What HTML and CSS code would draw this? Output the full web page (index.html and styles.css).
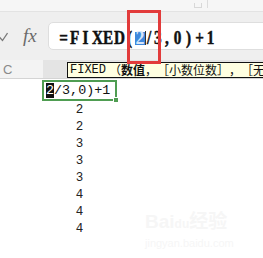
FILE: index.html
```html
<!DOCTYPE html>
<html>
<head>
<meta charset="utf-8">
<link rel="stylesheet" href="styles.css">
</head>
<body>
<div class="app">
  <div class="topbar"><span class="tb-mark"></span><span class="tb-line"></span></div>
  <div class="fbar">
    <svg class="check" width="8" height="10" viewBox="0 0 8 10"><path d="M-1 4.5 L2.5 8.5 L7.5 1" fill="none" stroke="#7a7a7a" stroke-width="1.3"/></svg>
    <span class="fx">fx</span>
    <div class="input">
      <span class="c">=</span><span class="c">F</span><span class="c">I</span><span class="c">X</span><span class="c">E</span><span class="c">D</span><span class="c">(</span><span class="sel">2</span><span class="caret"></span><span class="c w8">/</span><span class="c w9">3</span><span class="c w10">,</span><span class="c">0</span><span class="c">)</span><span class="c">+</span><span class="c">1</span>
    </div>
  </div>
  <div class="hdr">
    <div class="corner">C</div>
    <div class="colhdr"></div>
  </div>
  <div class="grid">
    <div class="col">
      <div class="editor"><span class="esel">2</span>/3,0)+1<span class="handle"></span></div>
      <div class="cell">2</div>
      <div class="cell">2</div>
      <div class="cell">3</div>
      <div class="cell">3</div>
      <div class="cell">3</div>
      <div class="cell">4</div>
      <div class="cell">4</div>
      <div class="cell">4</div>
    </div>
  </div>
  <div class="tip"><span class="lat">FIXED</span><span class="cjk">（<b>数值</b>，［小数位数］，［无千位分隔符］）</span></div>
  <div class="redbox"></div>
  <div class="wm"><div class="wm1">Bai<span class="paw">du</span>经验</div><div class="wm2">jingyan.baidu.com</div></div>
</div>
</body>
</html>
```
FILE: styles.css
```css
html, body { margin: 0; padding: 0; background: #ffffff; }
.app { position: relative; width: 263px; height: 258px; overflow: hidden; background: #ffffff; }
.topbar { height: 11px; background: #f6f6f6; border-bottom: 1px solid #e3e3e3; display: flex; align-items: flex-start; }
.tb-mark { margin-left: 194px; margin-top: 3px; width: 6px; height: 4px; border: 1px solid #d8d8d8; border-top: none; }
.tb-line { margin-left: 5px; width: 1px; height: 8px; background: #dcdcdc; }
.fbar { height: 48px; background: #efefef; display: flex; align-items: center; }
.check { display: block; width: 8px; height: 10px; margin-top: 1px; }
.fx { margin-left: 15px; width: 20px; font-family: "Liberation Serif", serif; font-style: italic; font-size: 19px; color: #6a6a6a; }
.input { margin-left: 5px; flex: 1; height: 28px; margin-right: -10px; background: #ffffff; border: 1px solid #dedede; border-radius: 5px; display: flex; align-items: center; box-sizing: border-box; padding-left: 9px; padding-top: 4px; font-family: "Liberation Serif", serif; font-weight: bold; font-size: 19px; color: #111; }
.c { display: inline-block; width: 11px; text-align: center; line-height: 14px; transform: scaleX(0.8); -webkit-text-stroke: 0.5px #111; }
.w8 { width: 8px; }
.w9 { width: 9px; }
.w10 { width: 10px; }
.sel { display: inline-block; width: 10px; text-align: center; background: #3e88dc; color: #d6e6fa; line-height: 13px; height: 13px; font-size: 18px; }
.caret { display: inline-block; width: 1px; height: 14px; background: #333; margin-right: -1px; }
.hdr { height: 18px; display: flex; border-bottom: 1px solid #d4d4d4; }
.corner { width: 43px; background: #f3f3f3; font-family: "Liberation Sans", sans-serif; font-size: 13px; color: #8a8a8a; padding-left: 3px; box-sizing: border-box; line-height: 19px; }
.colhdr { flex: 1; background: #e4e4e4; }
.grid { display: flex; }
.col { margin-left: 42px; width: 75px; display: flex; flex-direction: column; }
.editor { position: relative; height: 21px; box-sizing: border-box; border: 2px solid #4f9d52; margin-top: 1px; margin-bottom: 1px; padding-left: 2px; font-family: "Liberation Mono", monospace; font-size: 13.4px; line-height: 17px; color: #111; }
.esel { background: #111; color: #fff; }
.handle { position: absolute; right: -4px; bottom: -4px; width: 4px; height: 4px; background: #4f9d52; border: 1px solid #fff; }
.cell { height: 17px; text-align: center; font-family: "Liberation Mono", monospace; font-size: 12.5px; line-height: 17px; color: #222; }
.tip { position: absolute; left: 67px; top: 62px; height: 16px; box-sizing: border-box; width: 240px; background: #ffffe1; border: 1px solid #111; white-space: nowrap; font-size: 12px; line-height: 14px; padding-left: 2px; color: #111; display: flex; }
.lat { font-family: "Liberation Mono", monospace; margin-right: 3px; }
.cjk { font-family: "Noto Sans CJK SC", sans-serif; font-size: 12px; line-height: 14px; text-spacing-trim: space-all; font-feature-settings: "fwid"; }
.tip b { font-weight: bold; }
.redbox { position: absolute; left: 127px; top: 10px; width: 34px; height: 54px; box-sizing: border-box; border: 3px solid #e23b3b; }
.wm { position: absolute; left: 145px; top: 210px; color: #f6f6f6; font-family: "Liberation Sans", "Noto Sans CJK SC", sans-serif; }
.wm1 { font-size: 19px; font-weight: bold; line-height: 24px; }
.paw { font-size: 12px; }
.wm2 { font-size: 11px; line-height: 14px; }
```
